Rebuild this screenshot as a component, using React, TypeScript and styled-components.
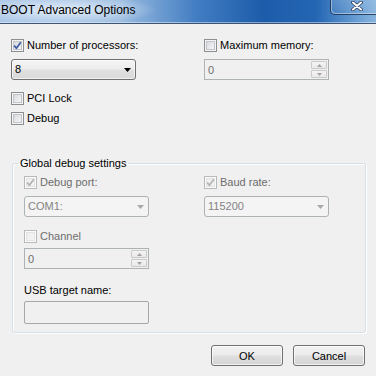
import React from 'react';
import styled, { createGlobalStyle } from 'styled-components';

const Global = createGlobalStyle`
  html, body { margin: 0; padding: 0; background: #f0f0f0; }
  body {
    font-family: "Liberation Sans", Arial, sans-serif;
    font-size: 11px;
    color: #000;
  }
  * { box-sizing: border-box; }
`;

const Window = styled.div`
  width: 376px;
  height: 376px;
  overflow: hidden;
  background: #f0f0f0;
  display: flex;
  flex-direction: column;
`;

const TitleBar = styled.div`
  height: 24px;
  flex: none;
  display: flex;
  align-items: flex-start;
  background:
    radial-gradient(ellipse 95px 15px at 62px 10px, rgba(232, 241, 251, 0.95), rgba(232, 241, 251, 0) 100%),
    linear-gradient(90deg, #a9c6e6 0%, #9bbce0 32%, #437ec3 52%, #1d5caa 70%, #2466b3 84%, #6fa3d6 96%, #86b3dd 100%);
  border-bottom: 1px solid #3e5474;
  box-shadow: inset 0 -1px 0 rgba(255, 255, 255, 0.45);
`;

const TitleText = styled.div`
  font-size: 12px;
  line-height: 14px;
  padding: 3px 0 0 1px;
  color: #000;
  white-space: nowrap;
`;

const CloseButton = styled.div`
  margin-left: auto;
  width: 46px;
  height: 15px;
  border: 1px solid rgba(22, 40, 70, 0.8);
  border-top: none;
  border-right: none;
  border-radius: 0 0 0 5px;
  box-shadow: inset 1px -1px 0 rgba(255, 255, 255, 0.4);
  background: linear-gradient(180deg, rgba(255, 255, 255, 0.12), rgba(255, 255, 255, 0.04));
  display: flex;
  align-items: flex-start;
  justify-content: center;
  padding: 1px 0 0 7px;
`;

const Body = styled.div`
  padding: 15px 11px 0 11px;
  display: flex;
  flex-direction: column;
`;

const TwoCol = styled.div<{ $first: number }>`
  display: grid;
  grid-template-columns: ${(p) => p.$first}px 1fr;
`;

const Stack = styled.div<{ $gap: number }>`
  display: flex;
  flex-direction: column;
  gap: ${(p) => p.$gap}px;
`;

const CheckRow = styled.label<{ $mt?: number }>`
  display: flex;
  align-items: center;
  gap: 3px;
  height: 13px;
  margin-top: ${(p) => p.$mt ?? 0}px;
`;

const Box = styled.span<{ $disabled?: boolean }>`
  width: 13px;
  height: 13px;
  flex: none;
  border: 1px solid ${(p) => (p.$disabled ? '#b9b9b9' : '#8e8f8f')};
  background: ${(p) =>
    p.$disabled
      ? 'linear-gradient(135deg, #ececec 0%, #f6f6f6 100%)'
      : 'linear-gradient(135deg, #cdd1d6 0%, #e9eaec 55%, #fafafa 100%)'};
  box-shadow: inset 0 0 0 1px ${(p) => (p.$disabled ? '#fbfbfb' : '#f4f4f4')},
    inset 0 0 0 2px ${(p) => (p.$disabled ? '#e2e2e2' : '#c2c6cb')};
  display: flex;
  align-items: center;
  justify-content: center;
`;

const Label = styled.span<{ $disabled?: boolean }>`
  color: ${(p) => (p.$disabled ? '#6d6d6d' : '#000')};
  line-height: 13px;
  white-space: nowrap;
`;

const Combo = styled.div<{ $disabled?: boolean }>`
  width: 125px;
  height: 21px;
  border-radius: 3px;
  border: 1px solid ${(p) => (p.$disabled ? '#adb2b5' : '#707070')};
  background: ${(p) =>
    p.$disabled
      ? '#f4f4f4'
      : 'linear-gradient(180deg, #f4f4f4 0%, #ececec 48%, #e0e0e0 52%, #d9d9d9 100%)'};
  box-shadow: ${(p) => (p.$disabled ? 'none' : 'inset 0 0 0 1px rgba(255,255,255,0.6)')};
  color: ${(p) => (p.$disabled ? '#838383' : '#000')};
  display: flex;
  align-items: center;
  padding: 0 4px 0 3px;
`;

const ComboText = styled.span`
  flex: 1;
  line-height: 13px;
`;

const Spin = styled.div`
  width: 125px;
  height: 21px;
  border: 1px solid #adb2b5;
  background: #f0f0f0;
  color: #6d6d6d;
  display: flex;
  align-items: center;
  padding: 0 1px 0 3px;
`;

const SpinButtons = styled.div`
  margin-left: auto;
  display: flex;
  flex-direction: column;
  gap: 1px;
`;

const SpinButton = styled.div`
  width: 16px;
  height: 8px;
  border: 1px solid #cacaca;
  border-radius: 1px;
  background: linear-gradient(180deg, #f4f4f4, #e9e9e9);
  display: flex;
  align-items: center;
  justify-content: center;
`;

const Group = styled.fieldset`
  width: 354px;
  margin: 32px 0 0 1px;
  padding: 6px 11px 8px 11px;
  border: 1px solid #d5dfe5;
  border-radius: 3px;
  box-shadow: inset 1px 1px 0 #fff, 1px 1px 0 #fff;
`;

const Legend = styled.legend`
  padding: 0 2px;
  margin-left: -6px;
  line-height: 13px;
  color: #000;
`;

const FieldLabel = styled.div<{ $mt: number }>`
  line-height: 13px;
  margin-top: ${(p) => p.$mt}px;
`;

const TextBox = styled.div`
  width: 125px;
  height: 23px;
  margin-top: 4px;
  border: 1px solid #a8a8a8;
  border-radius: 2px;
  background: #f0f0f0;
`;

const Buttons = styled.div`
  display: flex;
  justify-content: flex-end;
  gap: 10px;
  margin-top: 12px;
`;

const Button = styled.button`
  width: 72px;
  height: 21px;
  padding: 0;
  border: 1px solid #707070;
  border-radius: 3px;
  background: linear-gradient(180deg, #f2f2f2 0%, #ebebeb 48%, #dfdfdf 52%, #d4d4d4 100%);
  box-shadow: inset 0 0 0 1px rgba(255, 255, 255, 0.7);
  font-family: "Liberation Sans", Arial, sans-serif;
  font-size: 11px;
  color: #000;
`;

const Tick = ({ disabled }: { disabled?: boolean }) => (
  <svg width="9" height="9" viewBox="0 0 9 9">
    <path
      d="M1.2 4.6 L3.4 7.2 L7.8 1.2"
      fill="none"
      stroke={disabled ? '#b4b4b4' : '#3f5ea6'}
      strokeWidth="1.8"
      strokeLinejoin="round"
    />
  </svg>
);

const Check = ({
  label,
  checked,
  disabled,
  mt,
}: {
  label: string;
  checked?: boolean;
  disabled?: boolean;
  mt?: number;
}) => (
  <CheckRow $mt={mt}>
    <Box $disabled={disabled}>{checked && <Tick disabled={disabled} />}</Box>
    <Label $disabled={disabled}>{label}</Label>
  </CheckRow>
);

const Arrow = ({ disabled }: { disabled?: boolean }) => (
  <svg width="7" height="4" viewBox="0 0 7 4">
    <polygon points="0,0 7,0 3.5,4" fill={disabled ? '#a9a9a9' : '#000'} />
  </svg>
);

const DropDown = ({ value, disabled }: { value: string; disabled?: boolean }) => (
  <Combo $disabled={disabled}>
    <ComboText>{value}</ComboText>
    <Arrow disabled={disabled} />
  </Combo>
);

const SpinBox = ({ value }: { value: string }) => (
  <Spin>
    <span>{value}</span>
    <SpinButtons>
      <SpinButton>
        <svg width="5" height="3" viewBox="0 0 5 3">
          <polygon points="2.5,0 5,3 0,3" fill="#a3a3a3" />
        </svg>
      </SpinButton>
      <SpinButton>
        <svg width="5" height="3" viewBox="0 0 5 3">
          <polygon points="0,0 5,0 2.5,3" fill="#a3a3a3" />
        </svg>
      </SpinButton>
    </SpinButtons>
  </Spin>
);

export default function App() {
  return (
    <>
      <Global />
      <Window>
        <TitleBar>
          <TitleText>BOOT Advanced Options</TitleText>
          <CloseButton>
            <svg width="12" height="10" viewBox="0 0 12 10">
              <path d="M2 1.5 L10 8.5 M10 1.5 L2 8.5" stroke="#2a3a55" strokeWidth="3.6" strokeLinecap="round" />
              <path d="M2 1.5 L10 8.5 M10 1.5 L2 8.5" stroke="#ffffff" strokeWidth="2" strokeLinecap="round" />
            </svg>
          </CloseButton>
        </TitleBar>
        <Body>
          <TwoCol $first={193}>
            <Stack $gap={7}>
              <Check label="Number of processors:" checked />
              <DropDown value="8" />
            </Stack>
            <Stack $gap={7}>
              <Check label="Maximum memory:" />
              <SpinBox value="0" />
            </Stack>
          </TwoCol>
          <Check label="PCI Lock" mt={12} />
          <Check label="Debug" mt={7} />
          <Group>
            <Legend>Global debug settings</Legend>
            <TwoCol $first={180}>
              <Stack $gap={7}>
                <Check label="Debug port:" checked disabled />
                <DropDown value="COM1:" disabled />
              </Stack>
              <Stack $gap={7}>
                <Check label="Baud rate:" checked disabled />
                <DropDown value="115200" disabled />
              </Stack>
            </TwoCol>
            <Stack $gap={5}>
              <Check label="Channel" disabled mt={13} />
              <SpinBox value="0" />
            </Stack>
            <FieldLabel $mt={15}>USB target name:</FieldLabel>
            <TextBox />
          </Group>
          <Buttons>
            <Button>OK</Button>
            <Button>Cancel</Button>
          </Buttons>
        </Body>
      </Window>
    </>
  );
}
